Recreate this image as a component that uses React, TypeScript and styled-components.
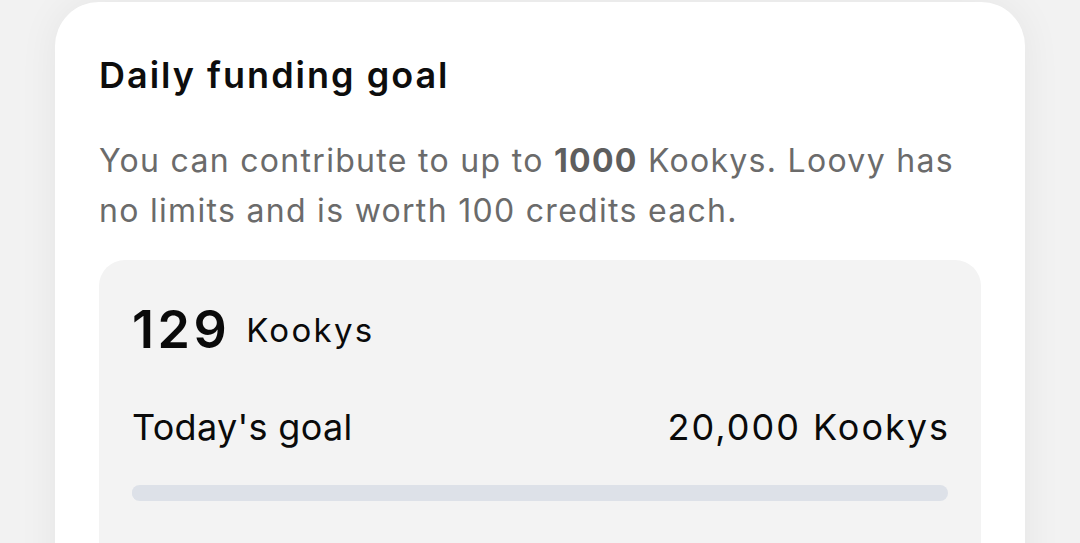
import React from "react";
import styled, { createGlobalStyle } from "styled-components";

const GlobalStyle = createGlobalStyle`
  html, body {
    margin: 0;
    padding: 0;
    background: #f2f2f2;
    font-family: Inter, "Noto Sans", "Liberation Sans", sans-serif;
    overflow: hidden;
  }
`;

const Page = styled.div`
  width: 1080px;
  height: 543px;
  box-sizing: border-box;
  padding: 2px 55px 0 55px;
  overflow: hidden;
`;

const Card = styled.section`
  background: #ffffff;
  border-radius: 44px 44px 0 0;
  box-shadow: 0 0 40px rgba(0, 0, 0, 0.06);
  padding: 52px 44px 0 44px;
  height: 700px;
  box-sizing: border-box;
  display: flex;
  flex-direction: column;
`;

const Title = styled.h2`
  margin: 0;
  font-size: 36px;
  line-height: 42px;
  font-weight: 600;
  color: #0d0d0d;
  letter-spacing: 2px;
`;

const Description = styled.p`
  margin: 40px 0 0 0;
  font-size: 32px;
  line-height: 50px;
  font-weight: 400;
  color: #6b6b6b;
  letter-spacing: 1.3px;

  strong {
    font-weight: 700;
    color: #5e5e5e;
  }
`;

const StatsBox = styled.div`
  margin-top: 24px;
  background: #f3f3f3;
  border-radius: 26px 26px 0 0;
  padding: 40px 33px 0 33px;
  display: flex;
  flex-direction: column;
  flex: 1;
`;

const AmountRow = styled.div`
  display: flex;
  align-items: center;
  gap: 16px;
  line-height: 60px;
`;

const Amount = styled.span`
  font-size: 52px;
  font-weight: 600;
  letter-spacing: 3.5px;
  color: #0a0a0a;
`;

const Unit = styled.span`
  font-size: 33px;
  font-weight: 400;
  letter-spacing: 2.3px;
  color: #0a0a0a;
`;

const GoalRow = styled.div`
  margin-top: 45px;
  display: flex;
  justify-content: space-between;
  align-items: baseline;
  font-size: 36px;
  line-height: 44px;
  color: #0a0a0a;
`;

const GoalLabel = styled.span`
  letter-spacing: 0.3px;
`;

const GoalValue = styled.span`
  letter-spacing: 2px;
  margin-right: -2px;
`;

const Track = styled.div`
  margin-top: 36px;
  height: 16px;
  border-radius: 8px;
  background: #dde1e8;
  overflow: hidden;
`;

const Fill = styled.div`
  height: 100%;
  background: #dde1e8;
`;

export default function App() {
  const current = 129;
  const goal = 20000;
  return (
    <>
      <GlobalStyle />
      <Page>
        <Card>
          <Title>Daily funding goal</Title>
          <Description>
            You can contribute to up to <strong>1000</strong> Kookys. Loovy has
            no limits and is worth 100 credits each.
          </Description>
          <StatsBox>
            <AmountRow>
              <Amount>{current}</Amount>
              <Unit>Kookys</Unit>
            </AmountRow>
            <GoalRow>
              <GoalLabel>Today's goal</GoalLabel>
              <GoalValue>{goal.toLocaleString("en-US")} Kookys</GoalValue>
            </GoalRow>
            <Track>
              <Fill style={{ width: `${(current / goal) * 100}%` }} />
            </Track>
          </StatsBox>
        </Card>
      </Page>
    </>
  );
}
